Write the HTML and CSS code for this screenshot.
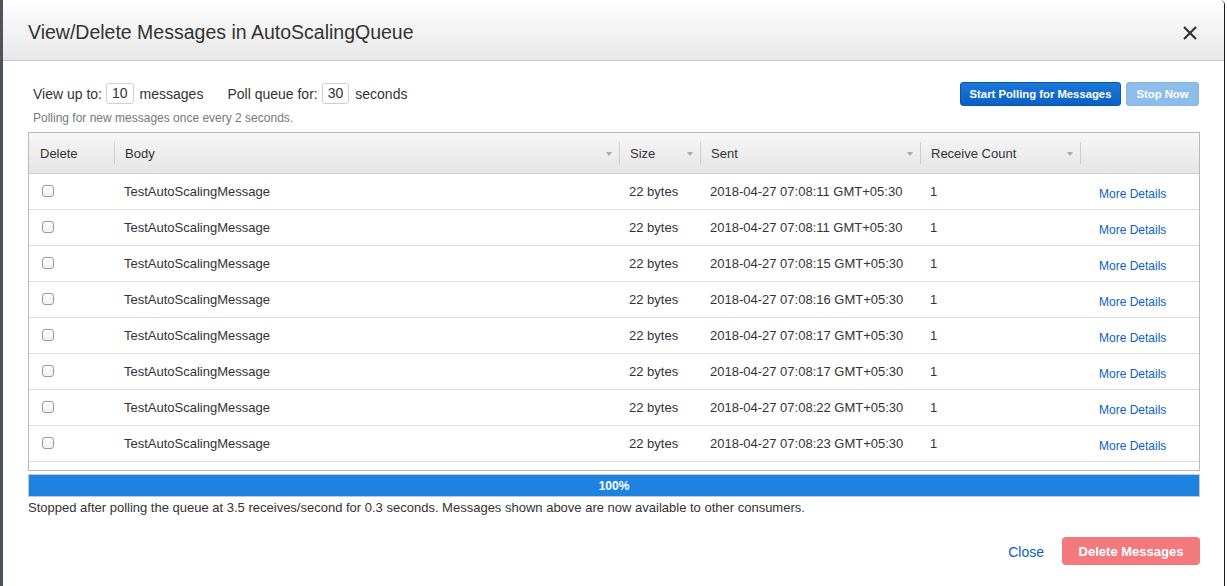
FILE: index.html
```html
<!DOCTYPE html>
<html>
<head>
<meta charset="utf-8">
<link rel="stylesheet" href="styles.css">
</head>
<body>
<div class="modal">
  <div class="modal-header">
    <h1 class="title">View/Delete Messages in AutoScalingQueue</h1>
    <span class="close-x"><svg width="14" height="14" viewBox="0 0 14 14"><path d="M1 1L13 13M13 1L1 13" stroke="#333" stroke-width="2.2" fill="none"/></svg></span>
  </div>
  <div class="modal-body">
    <div class="controls">
      <div class="fields">
        <span>View up to:</span><span class="num">10</span><span class="after">messages</span>
        <span class="poll">Poll queue for:</span><span class="num">30</span><span class="after">seconds</span>
      </div>
      <div class="buttons">
        <button class="btn btn-primary">Start Polling for Messages</button>
        <button class="btn btn-disabled">Stop Now</button>
      </div>
    </div>
    <div class="hint">Polling for new messages once every 2 seconds.</div>
    <div class="table">
      <div class="row head">
        <div class="hc">Delete</div>
        <div class="hc sep"><span>Body</span><i class="tri"></i></div>
        <div class="hc sep"><span>Size</span><i class="tri"></i></div>
        <div class="hc sep"><span>Sent</span><i class="tri"></i></div>
        <div class="hc sep"><span>Receive Count</span><i class="tri"></i></div>
        <div class="hc sep"></div>
      </div>
      <div class="row"><div class="c cb"><span class="box"></span></div><div class="c">TestAutoScalingMessage</div><div class="c">22 bytes</div><div class="c">2018-04-27 07:08:11 GMT+05:30</div><div class="c">1</div><div class="c link">More Details</div></div>
      <div class="row"><div class="c cb"><span class="box"></span></div><div class="c">TestAutoScalingMessage</div><div class="c">22 bytes</div><div class="c">2018-04-27 07:08:11 GMT+05:30</div><div class="c">1</div><div class="c link">More Details</div></div>
      <div class="row"><div class="c cb"><span class="box"></span></div><div class="c">TestAutoScalingMessage</div><div class="c">22 bytes</div><div class="c">2018-04-27 07:08:15 GMT+05:30</div><div class="c">1</div><div class="c link">More Details</div></div>
      <div class="row"><div class="c cb"><span class="box"></span></div><div class="c">TestAutoScalingMessage</div><div class="c">22 bytes</div><div class="c">2018-04-27 07:08:16 GMT+05:30</div><div class="c">1</div><div class="c link">More Details</div></div>
      <div class="row"><div class="c cb"><span class="box"></span></div><div class="c">TestAutoScalingMessage</div><div class="c">22 bytes</div><div class="c">2018-04-27 07:08:17 GMT+05:30</div><div class="c">1</div><div class="c link">More Details</div></div>
      <div class="row"><div class="c cb"><span class="box"></span></div><div class="c">TestAutoScalingMessage</div><div class="c">22 bytes</div><div class="c">2018-04-27 07:08:17 GMT+05:30</div><div class="c">1</div><div class="c link">More Details</div></div>
      <div class="row"><div class="c cb"><span class="box"></span></div><div class="c">TestAutoScalingMessage</div><div class="c">22 bytes</div><div class="c">2018-04-27 07:08:22 GMT+05:30</div><div class="c">1</div><div class="c link">More Details</div></div>
      <div class="row"><div class="c cb"><span class="box"></span></div><div class="c">TestAutoScalingMessage</div><div class="c">22 bytes</div><div class="c">2018-04-27 07:08:23 GMT+05:30</div><div class="c">1</div><div class="c link">More Details</div></div>
    </div>
    <div class="progress">100%</div>
    <div class="status">Stopped after polling the queue at 3.5 receives/second for 0.3 seconds. Messages shown above are now available to other consumers.</div>
    <div class="footer">
      <a class="close-link">Close</a>
      <button class="btn btn-danger">Delete Messages</button>
    </div>
  </div>
</div>
</body>
</html>
```
FILE: styles.css
```css
html, body {
  margin: 0;
  padding: 0;
  height: 586px;
  overflow: hidden;
}
body {
  background: linear-gradient(to right, #4d545c 0, #4d545c 3px, #ffffff 3px);
  font-family: "Liberation Sans", Arial, sans-serif;
  color: #333;
}
.modal {
  margin-left: 3px;
  width: 1222px;
  height: 586px;
  box-sizing: border-box;
  background: #fff;
  border-right: 1px solid #1a1a1a;
  border-radius: 5px 5px 0 0;
  overflow: hidden;
}
.modal-header {
  height: 61px;
  box-sizing: border-box;
  border-bottom: 1px solid #c9c9c9;
  background: linear-gradient(#ffffff, #e8e8e8);
  display: flex;
  align-items: center;
  justify-content: space-between;
  padding: 3px 27px 0 25px;
}
.title {
  margin: 0;
  font-size: 19.5px;
  font-weight: normal;
  color: #333;
  padding-top: 2px;
}
.close-x {
  display: flex;
  padding-top: 2px;
}
.modal-body {
  padding: 20px 24px 0 25px;
}
.controls {
  display: flex;
  justify-content: space-between;
  align-items: center;
  padding-left: 5px;
  height: 25px;
}
.fields {
  display: flex;
  align-items: center;
  font-size: 14px;
  color: #333;
}
.num {
  display: inline-block;
  box-sizing: border-box;
  height: 21px;
  line-height: 19px;
  padding: 0 5px;
  margin-left: 4px;
  border: 1px solid #cfcfcf;
  border-radius: 3px;
  font-size: 14px;
}
.after { margin-left: 6px; }
.poll { margin-left: 24px; }
.buttons {
  display: flex;
  gap: 5px;
  padding-right: 1px;
}
.btn {
  font-family: "Liberation Sans", Arial, sans-serif;
  font-weight: bold;
  color: #fff;
  border-radius: 3px;
  box-sizing: border-box;
  cursor: pointer;
}
.btn-primary {
  height: 24px;
  width: 161px;
  font-size: 11.3px;
  padding: 0;
  border: 1px solid #0a56a8;
  background: linear-gradient(#1c78d8, #0b60c2);
}
.btn-disabled {
  height: 24px;
  width: 73px;
  font-size: 11.3px;
  padding: 0;
  border: 1px solid #84b6e6;
  background: #8fbde9;
}
.hint {
  font-size: 12px;
  color: #777;
  padding-left: 5px;
  margin-top: 5px;
  line-height: 14px;
}
.table {
  margin-top: 7px;
  height: 339px;
  box-sizing: border-box;
  border: 1px solid #b9b9b9;
}
.row {
  display: grid;
  grid-template-columns: 85px 505px 81px 220px 160px 1fr;
  height: 36px;
  border-bottom: 1px solid #dedede;
  box-sizing: border-box;
  font-size: 13px;
  color: #333;
}
.row.head {
  height: 41px;
  background: linear-gradient(#f7f7f7, #e5e5e5);
  border-bottom: 1px solid #cfcfcf;
}
.hc {
  display: flex;
  align-items: center;
  justify-content: space-between;
  padding: 1px 7px 0 11px;
  font-size: 13px;
  color: #333;
}
.hc.sep {
  background-image: linear-gradient(#cdcdcd, #cdcdcd);
  background-size: 1px 22px;
  background-repeat: no-repeat;
  background-position: left center;
}
.tri {
  display: block;
  width: 0;
  height: 0;
  border-left: 3.5px solid transparent;
  border-right: 3.5px solid transparent;
  border-top: 4px solid #a9a9a9;
}
.c {
  display: flex;
  align-items: center;
  padding-left: 10px;
  padding-bottom: 1px;
}
.c.cb { padding-left: 13px; }
.box {
  display: block;
  width: 10px;
  height: 10px;
  border: 1px solid #9a9a9a;
  border-radius: 3px;
  background: linear-gradient(#ffffff, #f1f1f1);
}
.c.link {
  padding-left: 19px;
  padding-top: 5px;
  font-size: 12px;
  color: #0a5fbf;
}
.progress {
  margin-top: 3px;
  height: 23px;
  box-sizing: border-box;
  border: 1px solid #c7c7c7;
  background: #1e82e0;
  color: #fff;
  font-weight: bold;
  font-size: 12px;
  display: flex;
  align-items: center;
  justify-content: center;
  padding-top: 1px;
}
.status {
  margin-top: 3px;
  font-size: 13px;
  line-height: 16px;
  color: #333;
}
.footer {
  display: flex;
  justify-content: flex-end;
  align-items: center;
  gap: 18px;
  margin-top: 21px;
}
.close-link {
  font-size: 14px;
  color: #0a5fbf;
  padding-top: 1px;
}
.btn-danger {
  height: 28px;
  width: 138px;
  font-size: 13px;
  padding: 0;
  border: none;
  border-radius: 4px;
  background: #f27a7d;
}
```
